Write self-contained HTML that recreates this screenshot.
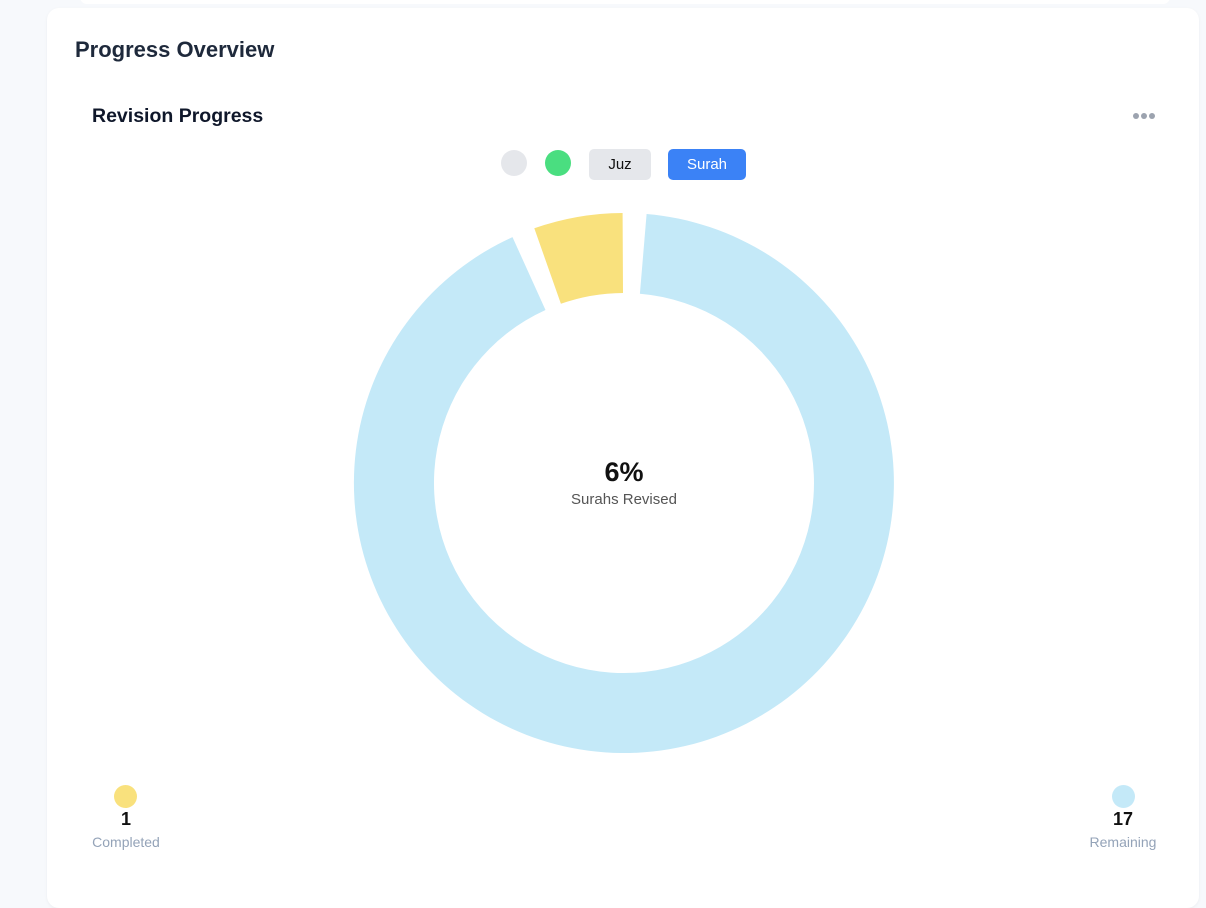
<!DOCTYPE html>
<html><head><meta charset="utf-8"><style>
*{margin:0;padding:0;box-sizing:border-box}
body{width:1206px;height:853px;overflow:hidden;background:#f7f9fc;font-family:"Liberation Sans",sans-serif;position:relative}
.top{position:absolute;left:80px;top:-10px;width:1090px;height:14px;background:#fff;border-radius:8px}
.card{position:absolute;left:47px;top:8px;width:1152px;height:900px;background:#fff;border-radius:12px;box-shadow:0 1px 3px rgba(0,0,0,.05)}
.abs{position:absolute}
h1{position:absolute;left:75px;top:37px;font-size:22px;font-weight:bold;color:#1e293b}
h2{position:absolute;left:92px;top:105px;font-size:19.5px;font-weight:bold;color:#0f172a}
.dot{position:absolute;width:6px;height:6px;border-radius:50%;background:#9ca3af;top:113px}
.c{position:absolute;border-radius:50%}
.btn{position:absolute;top:149px;height:31px;border-radius:5px;font-size:15px;line-height:31px;text-align:center}
.lbl{position:absolute;text-align:center;width:120px}
</style></head><body>
<div class="top"></div>
<div class="card"></div>
<h1>Progress Overview</h1>
<h2>Revision Progress</h2>
<div class="dot" style="left:1133px"></div><div class="dot" style="left:1141px"></div><div class="dot" style="left:1149px"></div>
<div class="c" style="left:501px;top:150px;width:26px;height:26px;background:#e5e7eb"></div>
<div class="c" style="left:545px;top:150px;width:26px;height:26px;background:#4ade80"></div>
<div class="btn" style="left:589px;width:62px;background:#e5e7eb;color:#111">Juz</div>
<div class="btn" style="left:668px;width:78px;background:#3b82f6;color:#fff">Surah</div>
<svg class="abs" style="left:0;top:0" width="1206" height="853">
<path d="M 646.6 214 A 270 270 0 1 1 512.5 237.1 L 545.5 310 A 190 190 0 1 0 639.9 293.7 Z" fill="#c4e9f8"/>
<path d="M 534.3 228.3 A 270 270 0 0 1 622.6 213 L 623 293 A 190 190 0 0 0 560.9 303.8 Z" fill="#f9e17d"/>
</svg>
<div class="abs" style="left:524px;top:457px;width:200px;text-align:center;font-size:27px;font-weight:bold;color:#111">6%</div>
<div class="abs" style="left:524px;top:491px;width:200px;text-align:center;font-size:15px;color:#555">Surahs Revised</div>
<div class="c" style="left:114px;top:785px;width:23px;height:23px;background:#f9e17d"></div>
<div class="lbl" style="left:66px;top:809px;font-size:18px;font-weight:bold;color:#111">1</div>
<div class="lbl" style="left:66px;top:834px;font-size:14px;color:#94a3b8">Completed</div>
<div class="c" style="left:1112px;top:785px;width:23px;height:23px;background:#c4e9f8"></div>
<div class="lbl" style="left:1063px;top:809px;font-size:18px;font-weight:bold;color:#111">17</div>
<div class="lbl" style="left:1063px;top:834px;font-size:14px;color:#94a3b8">Remaining</div>
</body></html>
